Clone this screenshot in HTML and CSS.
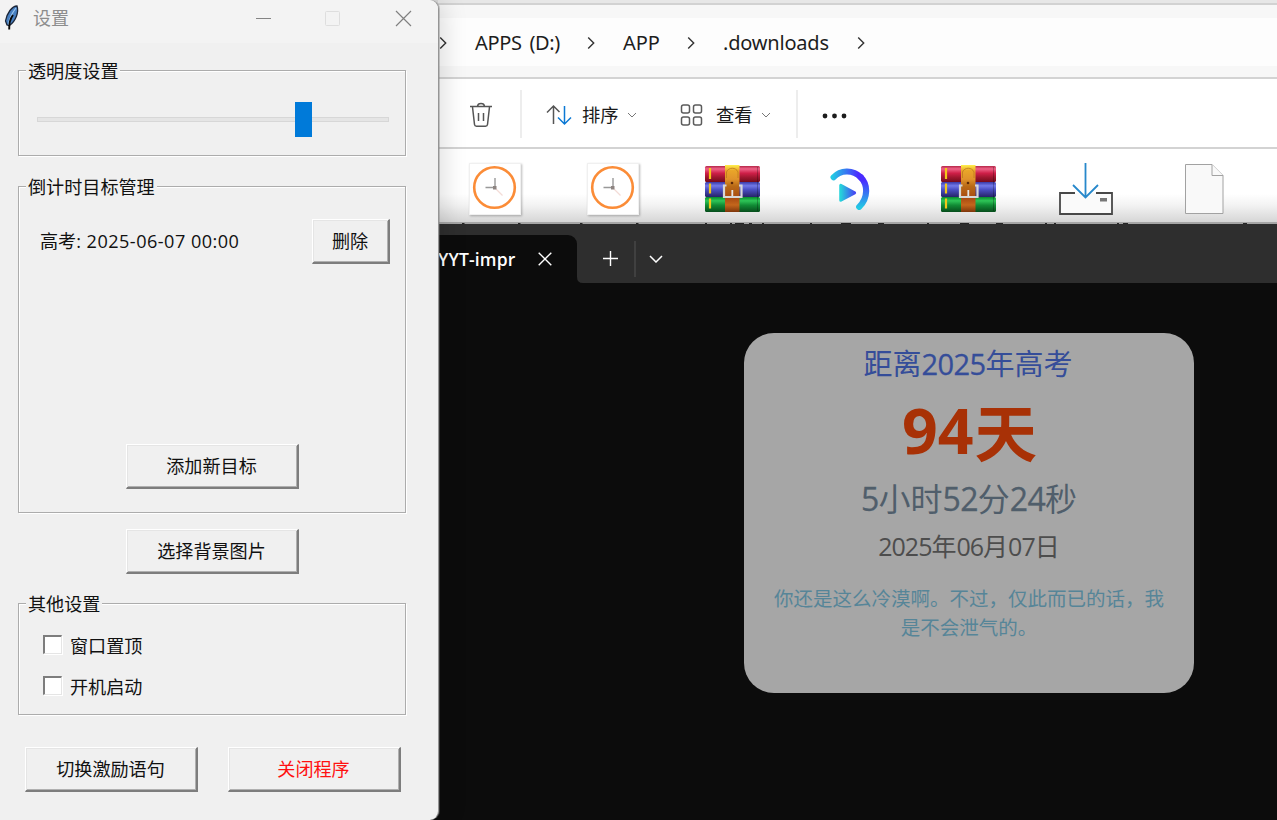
FILE: index.html
```html
<!DOCTYPE html>
<html lang="zh-CN">
<head>
<meta charset="utf-8">
<title>设置</title>
<link rel="stylesheet" href="styles.css">
</head>
<body>
<svg class="defs" width="0" height="0">
  <defs>
    <linearGradient id="red" x2="0" y2="1"><stop offset="0" stop-color="#b52748"/><stop offset=".18" stop-color="#ee6388"/><stop offset=".45" stop-color="#cf1f48"/><stop offset=".7" stop-color="#a01730"/><stop offset="1" stop-color="#750b1c"/></linearGradient>
    <linearGradient id="blue" x2="0" y2="1"><stop offset="0" stop-color="#3939a5"/><stop offset=".25" stop-color="#7279e8"/><stop offset=".5" stop-color="#4b50c4"/><stop offset="1" stop-color="#272468"/></linearGradient>
    <linearGradient id="green" x2="0" y2="1"><stop offset="0" stop-color="#078b2c"/><stop offset=".25" stop-color="#2ec557"/><stop offset=".55" stop-color="#118b35"/><stop offset="1" stop-color="#074d1c"/></linearGradient>
    <linearGradient id="strap" x2="0" y2="1"><stop offset="0" stop-color="#fff04c"/><stop offset=".12" stop-color="#e9a529"/><stop offset=".3" stop-color="#e0932b"/><stop offset=".45" stop-color="#b96a16"/><stop offset=".7" stop-color="#a84a12"/><stop offset=".85" stop-color="#c4661c"/><stop offset="1" stop-color="#7e360b"/></linearGradient>
    <linearGradient id="arc" gradientUnits="userSpaceOnUse" x1="2" y1="10" x2="30" y2="12"><stop offset="0" stop-color="#22cbe3"/><stop offset=".9" stop-color="#4a2cff"/></linearGradient>
    <linearGradient id="arc2" gradientUnits="userSpaceOnUse" x1="0" y1="12" x2="0" y2="39"><stop offset="0" stop-color="#4a2cff"/><stop offset="1" stop-color="#22cbe3"/></linearGradient>
    <linearGradient id="play"><stop offset="0" stop-color="#25d2da"/><stop offset="1" stop-color="#4548f2"/></linearGradient>
    <symbol id="clock" viewBox="0 0 52 52"><rect x=".5" y=".5" width="51" height="51" fill="#fff" stroke="#f0f0f0"/><circle cx="25.500" cy="24.500" r="20.300" fill="none" stroke="#fb8c37" stroke-width="2.600"/><path d="M16.500 24.500H26V15" fill="none" stroke="#999" stroke-width="1.400"/><path d="M27 26l6.500 6.500" stroke="#f3dcd7" stroke-width="1.200"/><rect x="24" y="23" width="3.500" height="3.500" fill="#8d8481"/></symbol>
    <symbol id="rar" viewBox="0 0 56 48">
      <rect x="1" y="1" width="55" height="16" rx="1.500" fill="url(#red)"/><rect x="1" y="17" width="55" height="15" rx="1.500" fill="url(#blue)"/><rect x="1" y="32" width="55" height="15" rx="1.500" fill="url(#green)"/>
      <path d="M6 3v11M6 18.500v10M6 33.500v10" stroke="#f3c719" stroke-width="2.200"/><path d="M53.500 2v44" stroke="#000" stroke-opacity=".25"/>
      <path d="M21 0h14.500v47H21z" fill="url(#strap)"/><path d="M22.500 13V7c2-5 9.500-5 11.500 0v6" fill="none" stroke="#bb781d" stroke-width=".8"/><circle cx="28" cy="18" r="1.300" fill="#5b2809"/>
      <path d="M22.500 20.500H20v11.500h17.500V20.500H35" fill="none" stroke="#d7d7d7" stroke-width="2.200"/><path d="M28.300 25v6" stroke="#e5e5e5" stroke-width="1.800"/>
    </symbol>
    <symbol id="crumb" viewBox="0 0 8 14"><path d="M1.200 1.500 6.700 7l-5.500 5.500" fill="none" stroke="#333" stroke-width="1.400"/></symbol>
    <symbol id="drop" viewBox="0 0 10 6"><path d="M1 1l4 4 4-4" fill="none" stroke="#777"/></symbol>
  </defs>
</svg>
<main class="desktop">
  <section class="explorer">
    <div class="strip"></div>
    <nav class="address">
      <svg class="crumb"><use href="#crumb"/></svg><span class="c1">APPS (D:)</span>
      <svg class="crumb"><use href="#crumb"/></svg><span class="c2">APP</span>
      <svg class="crumb"><use href="#crumb"/></svg><span class="c3">.downloads</span>
      <svg class="crumb"><use href="#crumb"/></svg>
    </nav>
    <div class="toolbar">
      <svg class="trash" width="24" height="26" viewBox="0 0 24 26" fill="none" stroke="#555" stroke-width="1.500"><path d="M1 4.500h22M3.500 5l2 17.500q.2 1.700 2 1.700h9q1.800 0 2-1.700l2-17.500M8.500 4.200q.3-2.700 3.500-2.700t3.500 2.700M9.500 11v8M14.500 11v8"/></svg>
      <i class="sep s1"></i>
      <svg class="sort" width="26" height="22" viewBox="0 0 26 22" fill="none" stroke-width="1.500"><path d="M7.500 20V2M1 8.500 7.500 2l6 6" stroke="#555"/><path d="M18.500 2v18M12 13.500l6.500 6.500 6.500-6.500" stroke="#0b78d4"/></svg>
      <span class="tool">排序</span><svg class="drop"><use href="#drop"/></svg>
      <svg class="view" width="24" height="24" viewBox="0 0 24 24" fill="none" stroke="#5b5b5b" stroke-width="1.500"><rect x="1.500" y="2" width="8" height="8" rx="2"/><rect x="13.500" y="2" width="8" height="8" rx="2"/><rect x="1.500" y="14" width="8" height="8" rx="2"/><rect x="13.500" y="14" width="8" height="8" rx="2"/></svg>
      <span class="tool">查看</span><svg class="drop"><use href="#drop"/></svg>
      <i class="sep s2"></i>
      <svg class="more" width="26" height="6" viewBox="0 0 26 6" fill="#1c1c1c"><circle cx="3" cy="3" r="2.400"/><circle cx="12.500" cy="3" r="2.400"/><circle cx="22" cy="3" r="2.400"/></svg>
    </div>
    <div class="files">
      <div class="file"><svg class="clock" width="52" height="52"><use href="#clock"/></svg></div>
      <div class="file"><svg class="clock" width="52" height="52"><use href="#clock"/></svg></div>
      <div class="file"><svg width="56" height="48"><use href="#rar"/></svg></div>
      <div class="file"><svg class="player" width="41" height="42" viewBox="0 0 40 41" fill="none" stroke-width="6" stroke-linecap="round"><path d="M3.500 9C10 2 22 1 30 9" stroke="url(#arc)"/><path d="M30 9c7 7 7.500 20-1.500 29" stroke="url(#arc2)"/><path d="M10.500 17v14.500l13.500-7.300z" fill="url(#play)" stroke="url(#play)" stroke-width="3" stroke-linejoin="round"/></svg></div>
      <div class="file"><svg width="56" height="48"><use href="#rar"/></svg></div>
      <div class="file"><svg class="download" width="54" height="52" viewBox="0 0 54 52" fill="none"><path d="M1 30h52v21H1z" fill="#fafafa"/><path d="M16 30H1v21h52V30H37" stroke="#484848" stroke-width="1.800"/><path d="M41 35h7v3.500h-7z" fill="#777"/><path d="M26.500 0v34M14 22l12.500 12.500L39 22" stroke="#2788cb" stroke-width="1.800"/></svg></div>
      <div class="file"><svg class="blank" width="40" height="50" viewBox="0 0 40 50" fill="#f9f9f9" stroke="#a2a2a2"><path d="M1.500.5H28l11 11v38H1.500z"/><path d="M28 .5v11h11"/></svg></div>
    </div>
    <svg class="labels" width="839" height="2" viewBox="438 0 839 2" stroke="#262626"><path d="M462 1.500h2.500M518 1.500h2.500M580 1.500h2.500M636 1.500h2.500M705 1.500h2M730 1.500h2M735 1.500h9M749 1.500h3M762 1.500h2M810 1.500h2M841 1.500h10M878 1.500h6M927 1.500h2M960 1.500h9M996 1.500h7M1045 1.500h2M1054 1.500h2M1117 1.500h2M1123 1.500h5M1243 1.500h4"/></svg>
  </section>

  <section class="terminal">
    <div class="tabs">
      <div class="tab"><b>YYT-impr</b><svg width="14" height="14" viewBox="0 0 14 14" stroke="#fff" stroke-width="1.400"><path d="M.7.700l12.600 12.600M13.300.7.700 13.300"/></svg></div>
      <svg class="flare" width="6" height="6" viewBox="0 0 8 8"><path d="M0 0q0 8 8 8H0z" fill="#0c0c0c"/></svg>
      <svg class="plus" width="16" height="16" viewBox="0 0 16 16" stroke="#fff" stroke-width="1.400"><path d="M8.500 0v15M1 7.500h15"/></svg>
      <i class="tabsep"></i>
      <svg class="tabdrop" width="14" height="8" viewBox="0 0 14 8" fill="none" stroke="#fff" stroke-width="1.500"><path d="M1 1l6 6 6-6"/></svg>
    </div>
  </section>

  <section class="countdown">
    <h1><span>距离</span><em>2025</em><span>年高考</span></h1>
    <p class="days"><em>94</em><span>天</span></p>
    <p class="time"><em>5</em>小时<em>52</em>分<em>24</em>秒</p>
    <p class="date"><em>2025</em>年<em>06</em>月<em>07</em>日</p>
    <p class="quote">你还是这么冷漠啊。不过，仅此而已的话，我<br>是不会泄气的。</p>
  </section>

  <section class="settings">
    <header class="titlebar">
      <svg class="feather" width="16" height="26" viewBox="0 0 16 26"><path d="M13 1C8 1 3 8 1.500 16l1.500 4 2.500.5C12 16 15 7 13 1z" fill="#477fc0" stroke="#1b2639" stroke-width="1.300"/><path d="M12 3C8 8 5 15 4.500 20" stroke="#9bc6ef" stroke-width="1.200" fill="none"/><path d="M9 10C6 14 5 19 5.200 24.500" stroke="#080808" stroke-width="1.900" fill="none"/></svg>
      <span class="caption">设置</span>
      <svg class="wbtns" width="158" height="18" viewBox="0 0 158 18" fill="none"><path d="M1 9.500h15" stroke="#848484"/><rect x="70.500" y="2.500" width="14" height="14" rx="1" stroke="#dedede"/><path d="M141 2l15 15M156 2l-15 15" stroke="#808080" stroke-width="1.200"/></svg>
    </header>
    <div class="body">
      <div class="group opacity"><span class="legend">透明度设置</span><div class="track"><div class="thumb"></div></div></div>
      <div class="group goals"><span class="legend">倒计时目标管理</span>
        <div class="goal"><span>高考<em>: 2025-06-07 00:00</em></span><button class="btn small">删除</button></div>
        <button class="btn">添加新目标</button>
      </div>
      <button class="btn pick">选择背景图片</button>
      <div class="group other"><span class="legend">其他设置</span>
        <label class="check"><i class="box"></i>窗口置顶</label>
        <label class="check"><i class="box"></i>开机启动</label>
      </div>
      <div class="actions"><button class="btn">切换激励语句</button><button class="btn quit">关闭程序</button></div>
    </div>
  </section>
</main>
</body>
</html>
```
FILE: styles.css
```css
* { box-sizing: border-box; }
body { margin: 0; overflow: hidden; font-family: "Open Sans", "Noto Sans CJK SC", sans-serif; }
em { font-style: normal; }
svg { display: block; flex: none; }
.defs { position: absolute; }
.desktop { position: relative; width: 1277px; height: 820px; overflow: hidden; background: #0c0c0c; }

/* File explorer, behind the other windows */
.explorer { position: absolute; left: 420px; top: 0; width: 857px; height: 224px; padding-left: 18px; background: #d8d8d8; display: flex; flex-direction: column; }
.strip { height: 5px; background: #e7e7e7; border-bottom: 2px solid #d2d2d2; }
.address { height: 74px; display: flex; align-items: center; background: #fdfdfd; border-top: 13px solid #f7f7f7; border-bottom: 2px solid #d3d3d3; box-shadow: inset 0 -11px #f7f7f7; font: 20px/48px "Noto Sans", sans-serif; color: #1d1d1d; padding: 0 0 9px 1px; }
.crumb { width: 8px; height: 14px; }
.c1 { width: 86px; margin: 0 26px 0 28px; letter-spacing: -.35px; word-spacing: 3px; white-space: nowrap; }
.c2 { width: 38px; margin: 0 26px 0 28px; letter-spacing: -.1px; }
.c3 { width: 106px; margin: 0 28px; letter-spacing: -.2px; }
.toolbar { height: 70px; background: #fff; border-bottom: 2px solid #d3d3d3; display: flex; align-items: center; padding: 4px 0 0 31px; }
.sep { width: 2px; height: 48px; background: #ededed; margin-top: -2px; }
.s1 { margin-left: 27px; margin-right: 24px; }
.sort { margin-right: 10px; }
.tool { font-size: 18.3px; width: 36px; line-height: 24px; color: #1a1a1a; white-space: nowrap; }
.drop { width: 10px; height: 6px; margin-left: 9px; }
.view { margin-left: 43px; margin-right: 12px; }
.s2 { margin-left: 25px; margin-right: 24px; }
.more { margin-top: 2px; }
.files { flex: 1; display: grid; grid-template-columns: repeat(7, 118px); background: linear-gradient(#fff 45px, #f3f3f3 56px, #d6d6d6 73px, #a6a6a6 73px); }
.file { display: flex; justify-content: center; align-items: flex-start; padding: 15px 2px 0 0; }
.file svg { margin-top: 1px; }
.file .clock { margin: -1px 2px 0 0; filter: drop-shadow(1px 1px 1px #0004); }
.file .player { margin-top: 4px; }
.file .download { margin-top: -1px; }
.file .blank { margin-top: 0; }
.labels { position: absolute; left: 18px; bottom: 0; }

/* Terminal window */
.terminal { position: absolute; left: 420px; top: 224px; width: 857px; height: 596px; background: #0c0c0c; }
.tabs { height: 59px; background: #2e2e2e; display: flex; align-items: center; padding: 11px 0 0 18px; }
.tab { width: 139px; height: 48px; background: #0c0c0c; border-radius: 0 9px 0 0; display: flex; align-items: center; color: #fff; font: 17.5px "Open Sans", sans-serif; }
.tab b { width: 77px; margin: 0 23px 0 0; font-weight: 600; white-space: nowrap; letter-spacing: .15px; }
.flare { align-self: flex-end; }
.plus { margin-left: 19px; }
.tabsep { width: 2px; height: 36px; background: #404040; margin-left: 16px; }
.tabdrop { margin-left: 13px; }

/* Countdown widget */
.countdown { position: absolute; left: 744px; top: 333px; width: 450px; height: 360px; border-radius: 30px; background: #a6a6a6; text-align: center; padding-top: 12px; }
.countdown h1, .countdown p { margin: 0; white-space: nowrap; font-weight: 400; }
.countdown h1 { font-size: 29px; line-height: 38px; color: #354d99; padding-right: 2px; }
.countdown h1 em { letter-spacing: -.6px; -webkit-text-stroke: .3px; }
.countdown .days { font-size: 62.5px; line-height: 80px; margin-top: 8px; color: #a83106; font-weight: 700; }
.countdown .days em { position: relative; top: -1px; }
.countdown .days span { position: relative; left: 1px; top: 2px; }
.countdown .time { font-size: 32px; line-height: 42px; margin-top: 7px; color: #505e6b; }
.countdown .time em { letter-spacing: -.7px; -webkit-text-stroke: .3px; }
.countdown .date { font-size: 25px; line-height: 34px; margin-top: 9px; color: #4d4d4d; }
.countdown .date em { letter-spacing: -1px; }
.countdown .quote { font-size: 19.5px; line-height: 29px; margin-top: 21px; color: #568598; }

/* Settings window, in front */
.settings { position: absolute; left: 0; top: 0; width: 439px; height: 820px; background: #f0f0f0; border-right: 1px solid #959595; border-radius: 0 9px 9px 0; box-shadow: 1px 0 0 #77777760, 5px 0 24px #0002; font-size: 18.1px; color: #111; }
.titlebar { height: 43px; background: #f3f3f3; border-radius: 0 9px 0 0; display: flex; padding: 5px 0 0 4px; }
.caption { margin: 0 1px 0 13px; width: 36px; font-size: 18px; line-height: 26px; color: #8d8d8d; }
.wbtns { margin: 4px 0 0 185px; }
.body { padding: 27px 32px 0 18px; }
.group { position: relative; border: 1px solid #acacac; box-shadow: 1px 1px #fff, inset 1px 1px #fff; padding: 0 16px 0 18px; }
.legend { position: absolute; left: 7px; top: -13px; padding: 0 2px; line-height: 26px; background: #f0f0f0; white-space: nowrap; }
.opacity { height: 86px; padding-top: 46px; }
.track { height: 5px; background: #e5e5e5; border: 1px solid #d7d7d7; display: flex; align-items: center; padding-left: 257px; }
.thumb { width: 17px; height: 35px; background: #007ad9; flex: none; }
.goals { height: 327px; margin-top: 30px; padding-top: 32px; display: flex; flex-direction: column; }
.goal { display: flex; justify-content: space-between; align-items: center; margin: 0 -1px 180px 3px; }
.goal span { margin-top: -4px; white-space: nowrap; }
.goal em { letter-spacing: .47px; }
.btn { width: 173px; height: 45px; padding: 0 1px 2px 0; font: 18.1px/24px "Noto Sans CJK SC", sans-serif; color: #111; background: #f0f0f0; border: solid; border-width: 1px 2px 2px 1px; border-color: #fff #7d7d7d #7d7d7d #fff; box-shadow: inset 1px 1px #e5e5e5, inset -1px -1px #b0b0b0; display: block; white-space: nowrap; }
.goals > .btn { margin-left: 89px; }
.btn.small { width: 78px; }
.pick { margin: 16px 0 0 108px; }
.other { height: 112px; margin-top: 29px; padding: 27px 0 0 24px; }
.check { display: flex; align-items: center; height: 27px; gap: 8px; margin-bottom: 14px; }
.box { width: 19px; height: 19px; background: #fff; border: solid; border-width: 2px 1px 1px 2px; border-color: #7d7d7d #e5e5e5 #e5e5e5 #7d7d7d; box-shadow: 1px 1px #fff; }
.actions { display: flex; gap: 30px; margin: 32px 0 0 7px; }
.quit { color: #ff1010; }
```
